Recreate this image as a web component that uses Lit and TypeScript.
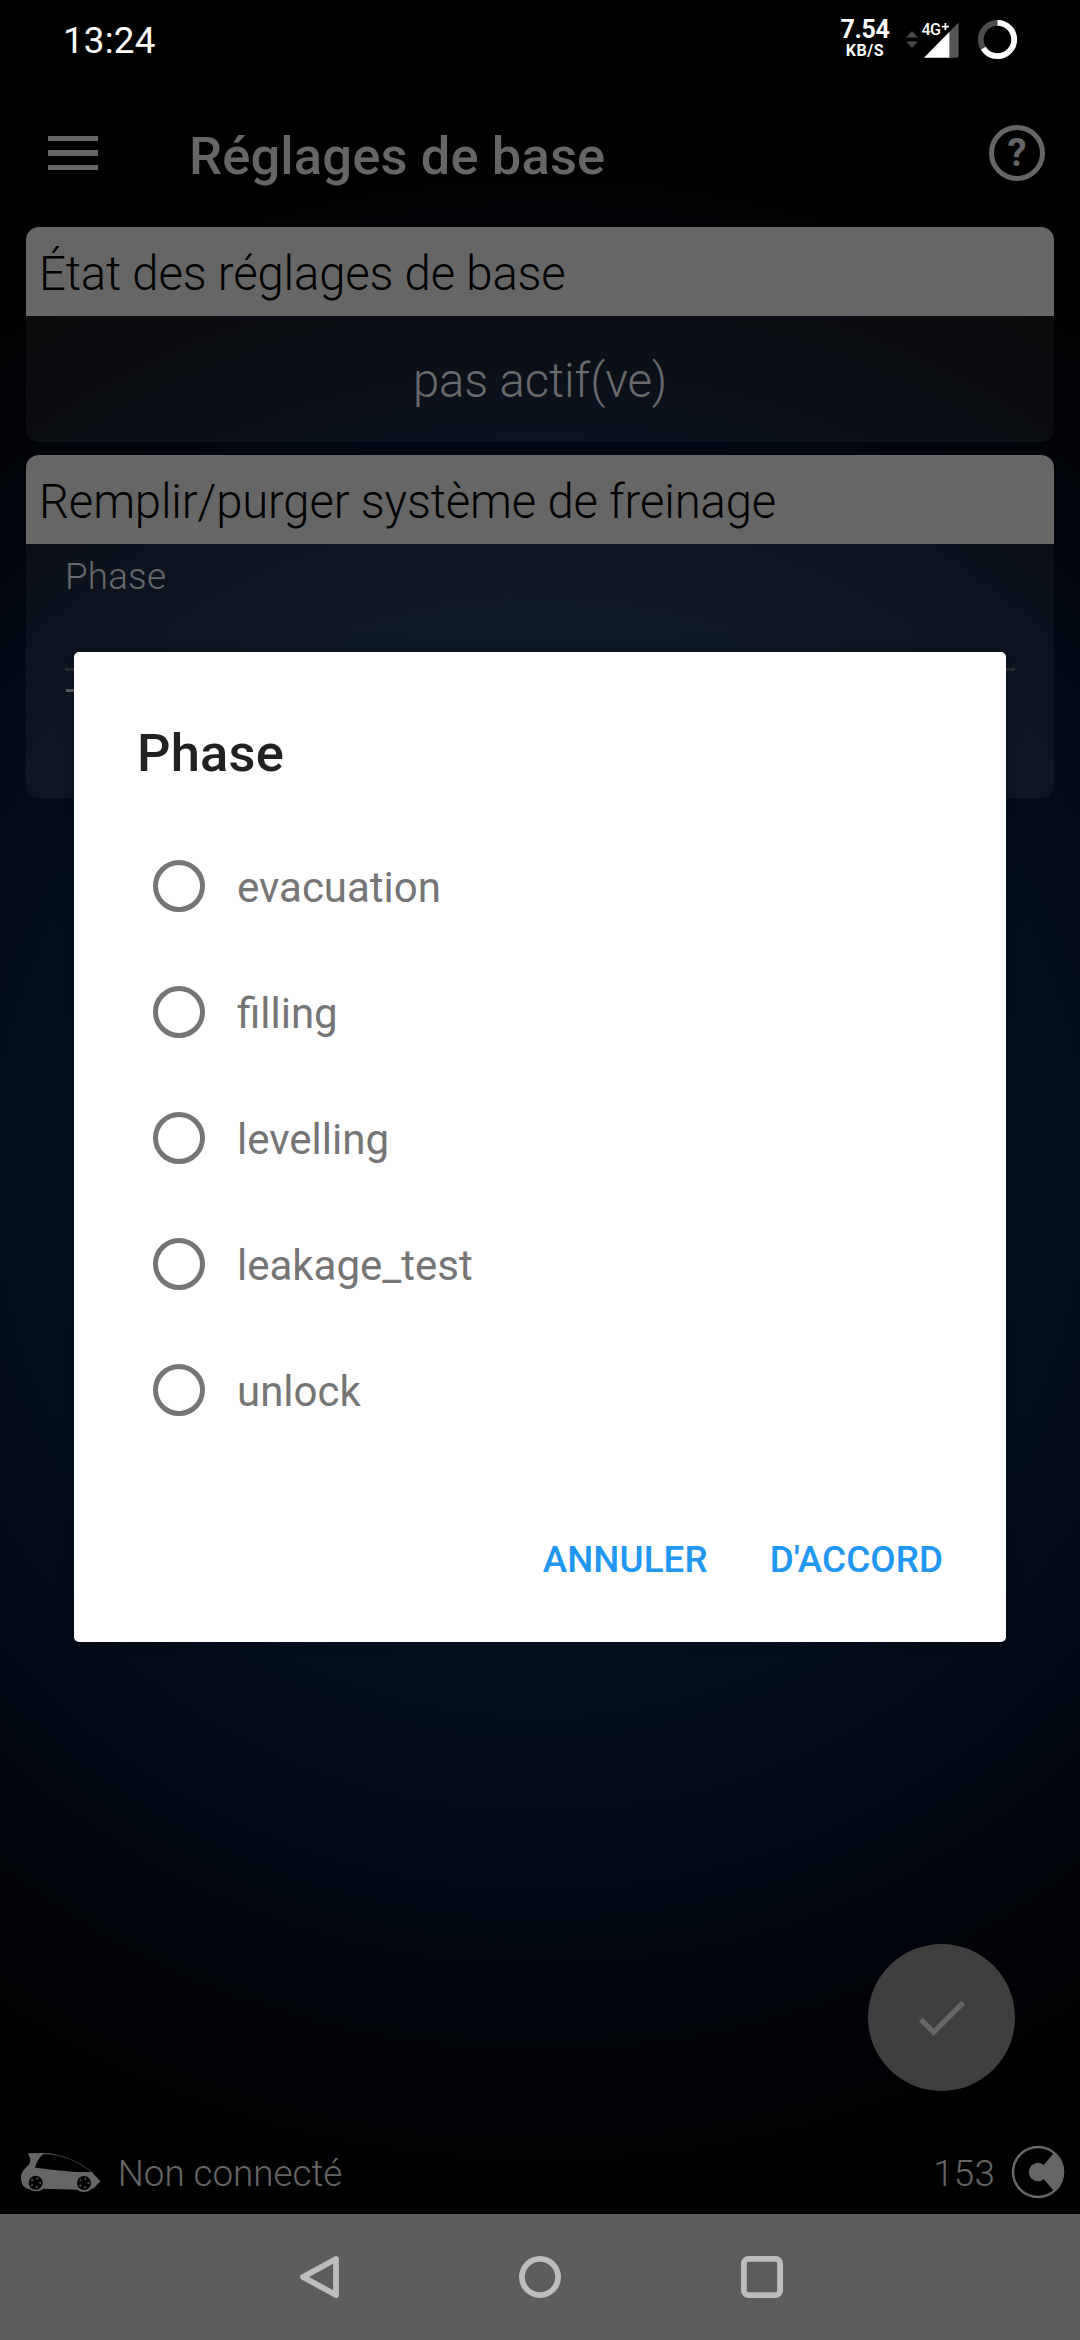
import { LitElement, html, css, svg } from "lit";
import { customElement, property } from "lit/decorators.js";

const SPOKES = [0, 72, 144, 216, 288];

const wheel = (cx: number, cy: number) => svg`
  <circle cx=${cx} cy=${cy} r="21" fill="#000" />
  ${SPOKES.map(
    (a) => svg`<path d="M0 -8 L3.2 -16 L-3.2 -16 Z" fill="#666" transform="translate(${cx} ${cy}) rotate(${a + 20})" />`,
  )}`;

@customElement("status-bar")
class StatusBar extends LitElement {
  static styles = css`
    :host {
      display: flex;
      align-items: flex-start;
      justify-content: space-between;
      height: 80px;
      box-sizing: border-box;
      padding: 0 62px 0 63px;
      color: #fff;
    }
    .clock {
      font-size: 36.75px;
      line-height: 82px;
      letter-spacing: 0.2px;
    }
    .right {
      display: flex;
      align-items: flex-start;
    }
    .speed {
      display: flex;
      flex-direction: column;
      align-items: center;
      width: 50px;
      margin-right: 15px;
      padding-top: 17px;
      font-weight: 700;
    }
    .rate {
      font-size: 25px;
      line-height: 26px;
      letter-spacing: -0.3px;
    }
    .unit {
      font-size: 16px;
      line-height: 16px;
      letter-spacing: 0.6px;
    }
    svg {
      display: block;
    }
    .net {
      font-size: 16px;
      font-weight: 500;
      letter-spacing: -0.5px;
    }
  `;
  render() {
    return html`
      <span class="clock">13:24</span>
      <div class="right">
        <div class="speed"><span class="rate">7.54</span><span class="unit">KB/S</span></div>
        <svg width="113" height="80" viewBox="905 0 113 80">
          <path d="M906 37.5 L912 31 L918 37.5 Z M906 41.5 L918 41.5 L912 47.8 Z" fill="#4a4a4a" />
          <path d="M924 57.8 L949.7 31.6 V57.8 Z" fill="#fff" />
          <path d="M949.7 31.6 L958.6 22.6 V55.5 Q958.6 57.8 956.3 57.8 H949.7 Z" fill="#555" />
          <text class="net" x="921.5" y="34.8" fill="#fff">4G</text>
          <path d="M945.4 23 V30.2 M942 26.6 H948.8" stroke="#fff" stroke-width="1.7" />
          <circle cx="997.5" cy="39.5" r="16.7" fill="none" stroke="#4d4d4d" stroke-width="5.8" />
          <circle cx="997.5" cy="39.5" r="16.7" fill="none" stroke="#fff" stroke-width="5.8"
            pathLength="360" stroke-dasharray="238 122" transform="rotate(-90 997.5 39.5)" />
        </svg>
      </div>
    `;
  }
}

@customElement("app-toolbar")
class AppToolbar extends LitElement {
  static styles = css`
    :host {
      display: flex;
      align-items: center;
      height: 147px;
      box-sizing: border-box;
      padding: 0 35px 1px 48px;
      color: #666;
    }
    .menu {
      display: flex;
      flex-direction: column;
      gap: 9px;
      width: 50px;
    }
    .bar {
      height: 5.4px;
      background: #666;
    }
    .title {
      flex: 1;
      margin-left: 91px;
      padding-top: 6px;
      font-size: 52.5px;
      line-height: 64px;
      font-weight: 500;
      letter-spacing: 0.13px;
    }
    .help {
      display: flex;
      align-items: center;
      justify-content: center;
      box-sizing: border-box;
      width: 56px;
      height: 56px;
      border: 5.5px solid #666;
      border-radius: 50%;
      font-size: 38px;
      line-height: 44px;
      font-weight: 700;
    }
  `;
  render() {
    return html`
      <div class="menu"><div class="bar"></div><div class="bar"></div><div class="bar"></div></div>
      <div class="title">Réglages de base</div>
      <div class="help">?</div>
    `;
  }
}

@customElement("setting-card")
class SettingCard extends LitElement {
  @property() heading = "";
  static styles = css`
    :host {
      display: block;
      border-radius: 13px;
      overflow: hidden;
      font-weight: 300;
    }
    .heading {
      height: 89px;
      box-sizing: border-box;
      padding: 3px 13px 0;
      background: #666;
      color: #000;
      font-size: 47.25px;
      line-height: 88px;
      letter-spacing: -0.16px;
      white-space: nowrap;
    }
    .body {
      background: rgba(255, 255, 255, 0.045);
    }
  `;
  render() {
    return html`<div class="heading">${this.heading}</div><div class="body"><slot></slot></div>`;
  }
}

@customElement("phase-dialog")
class PhaseDialog extends LitElement {
  @property({ attribute: false }) options: string[] = [];
  static styles = css`
    :host {
      display: flex;
      flex-direction: column;
      box-sizing: border-box;
      background: #fff;
      border-radius: 5px;
      padding: 69px 63px 0;
    }
    .title {
      color: #212121;
      font-size: 52.5px;
      line-height: 64px;
      font-weight: 500;
      letter-spacing: 0.2px;
    }
    .list {
      display: flex;
      flex-direction: column;
      margin-top: 38px;
      padding-left: 16px;
    }
    .option {
      display: flex;
      align-items: center;
      gap: 32px;
      height: 126px;
      color: #757575;
      font-size: 42px;
      line-height: 50px;
    }
    .radio {
      box-sizing: border-box;
      width: 52px;
      height: 52px;
      border: 5px solid #757575;
      border-radius: 50%;
    }
    .label {
      padding-top: 3px;
    }
    .actions {
      display: flex;
      justify-content: flex-end;
      gap: 62px;
      margin-top: 83px;
      color: #2196f3;
      font-size: 36.75px;
      line-height: 48px;
      font-weight: 500;
      letter-spacing: 0.1px;
    }
  `;
  render() {
    return html`
      <div class="title">Phase</div>
      <div class="list">
        ${this.options.map(
          (o) => html`<div class="option"><span class="radio"></span><span class="label">${o}</span></div>`,
        )}
      </div>
      <div class="actions"><span>ANNULER</span><span>D'ACCORD</span></div>
    `;
  }
}

@customElement("connection-bar")
class ConnectionBar extends LitElement {
  static styles = css`
    :host {
      display: flex;
      align-items: center;
      height: 84px;
      box-sizing: border-box;
      padding: 0 15px 0 20px;
      color: #666;
      font-size: 36.75px;
      line-height: 48px;
      font-weight: 300;
    }
    .state {
      flex: 1;
      margin-left: 16px;
      padding-top: 4px;
    }
    .count {
      margin-right: 16px;
      padding-top: 4px;
      letter-spacing: 0.2px;
    }
    svg {
      display: block;
    }
  `;
  render() {
    return html`
      <svg width="81.7" height="41.7" viewBox="60 90 245 125">
        <path fill="#666" d="M84 97 L130 96 C190 98 240 125 275 152 L301 181 L284 199 C279 204 274 203 271 206 C262 215 241 215 233 206 L129 203 C120 213 97 213 88 205 C72 200 63 190 63 170 C63 151 76 141 86 131 C94 122 91 113 84 97 Z" />
        <path fill="#000" d="M105 140 C110 124 118 106 132 99 C188 100 236 123 273 152 C240 157 150 145 105 140 Z" />
        ${wheel(107, 185)} ${wheel(252, 186)}
      </svg>
      <span class="state">Non connecté</span>
      <span class="count">153</span>
      <svg width="54" height="54" viewBox="-27 -27 54 54">
        <circle r="25" fill="none" stroke="#666" stroke-width="2.6" />
        <circle r="9.2" fill="#666" />
        <path fill="#666" d="M0 0 L6 -7.5 L16 -19 A25 25 0 0 1 16 19 L6 7.5 Z" />
      </svg>
    `;
  }
}

@customElement("nav-bar")
class NavBar extends LitElement {
  static styles = css`
    :host {
      display: flex;
      align-items: center;
      justify-content: center;
      gap: 174px;
      height: 126px;
      background: #5d5d5d;
    }
    svg {
      display: block;
      fill: none;
      stroke: #bdbdbd;
      stroke-width: 5.8;
      stroke-linejoin: round;
    }
  `;
  render() {
    return html`
      <svg width="48" height="48" viewBox="0 0 48 48"><path d="M42 6 V42 L9 24 Z" /></svg>
      <svg width="48" height="48" viewBox="0 0 48 48"><circle cx="24" cy="24" r="18.1" /></svg>
      <svg width="48" height="48" viewBox="0 0 48 48"><rect x="5.9" y="5.9" width="36.2" height="36.2" rx="4.5" /></svg>
    `;
  }
}

@customElement("app-root")
class AppRoot extends LitElement {
  static styles = css`
    :host {
      display: flex;
      flex-direction: column;
      position: relative;
      width: 1080px;
      height: 2340px;
      overflow: hidden;
      font-family: Roboto, "Liberation Sans", sans-serif;
      background: radial-gradient(
        circle at 540px 1170px,
        #05172e 0,
        #041426 400px,
        #040f1f 530px,
        #020914 730px,
        #01050c 830px,
        #010308 900px,
        #000102 1000px,
        #000 1060px
      ) #000;
    }
    .content {
      display: flex;
      flex-direction: column;
      gap: 13px;
      flex: 1;
      padding: 0 26px;
    }
    .status {
      height: 126px;
      color: #686a6d;
      font-size: 47.25px;
      line-height: 130px;
      letter-spacing: -0.1px;
      text-align: center;
    }
    .field {
      height: 254px;
      box-sizing: border-box;
      padding: 10px 39px 0;
    }
    .label {
      color: #66696d;
      font-size: 36.75px;
      line-height: 46px;
      letter-spacing: 0.2px;
    }
    .rule {
      height: 3px;
      margin-top: 68px;
      background: #292d34;
    }
    .mark {
      width: 30px;
      height: 2.5px;
      margin: 18px 0 0 1px;
      background: #5c5f62;
    }
    .dialog {
      position: absolute;
      left: 74px;
      top: 652px;
      width: 932px;
      height: 990px;
      box-shadow: 0 0 14px rgba(0, 0, 0, 0.3);
    }
    .fab {
      position: absolute;
      left: 868px;
      top: 1944px;
      display: flex;
      align-items: center;
      justify-content: center;
      width: 147px;
      height: 147px;
      border-radius: 50%;
      background: #3f3f3f;
    }
  `;
  render() {
    return html`
      <status-bar></status-bar>
      <app-toolbar></app-toolbar>
      <div class="content">
        <setting-card heading="État des réglages de base"><div class="status">pas actif(ve)</div></setting-card>
        <setting-card heading="Remplir/purger système de freinage">
          <div class="field">
            <div class="label">Phase</div>
            <div class="rule"></div>
            <div class="mark"></div>
          </div>
        </setting-card>
      </div>
      <connection-bar></connection-bar>
      <nav-bar></nav-bar>
      <div class="fab">
        <svg width="63" height="63" viewBox="0 0 24 24">
          <path fill="#666" d="M9 16.17 4.83 12l-1.42 1.41L9 19 21 7l-1.41-1.41z" />
        </svg>
      </div>
      <phase-dialog
        class="dialog"
        .options=${["evacuation", "filling", "levelling", "leakage_test", "unlock"]}
      ></phase-dialog>
    `;
  }
}
